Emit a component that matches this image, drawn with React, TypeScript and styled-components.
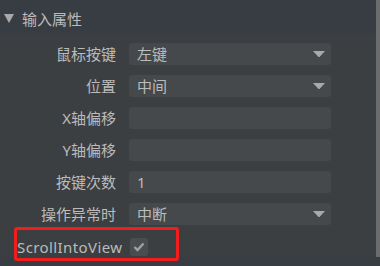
import React from 'react'
import styled, { createGlobalStyle } from 'styled-components'

const GlobalStyle = createGlobalStyle`
  html, body {
    margin: 0;
    padding: 0;
    background: #3c3f41;
  }
  * {
    box-sizing: border-box;
  }
`

const Frame = styled.div`
  position: relative;
  width: 380px;
  height: 266px;
  display: flex;
  flex-direction: column;
  background: #3c3f41;
  font-family: 'Noto Sans', 'Noto Sans CJK SC', sans-serif;
  font-size: 15px;
  color: #bbbbbb;
  overflow: hidden;
`

const Main = styled.div`
  display: flex;
  flex-direction: row;
  height: 257px;
`

const Content = styled.div`
  flex: 1;
  display: flex;
  flex-direction: column;
`

const Scrollbar = styled.div`
  width: 4px;
  background: #6b6c6d;
`

const BottomBar = styled.div`
  flex: 1;
  background: #383d44;
`

const Header = styled.div`
  height: 33px;
  display: flex;
  align-items: center;
  gap: 8px;
  padding: 4px 0 0 4px;
  background: #383d44;
  color: #bbbbbb;
`

const Body = styled.div`
  display: flex;
  flex-direction: column;
  gap: 10px;
  padding-top: 10px;
`

const Row = styled.div`
  display: flex;
  align-items: center;
  gap: 13px;
  height: 22px;
`

const Label = styled.div`
  width: 116px;
  text-align: right;
  white-space: nowrap;
  line-height: 22px;
`

const Field = styled.div`
  width: 202px;
  height: 22px;
  border-radius: 3px;
  background: #46494b;
  display: flex;
  align-items: center;
  justify-content: space-between;
  padding: 0 6px 0 8px;
  line-height: 22px;
`

const CheckRow = styled.div`
  display: flex;
  align-items: center;
  gap: 8px;
  height: 22px;
  padding: 1px 0 0 17px;
`

const CheckLabel = styled.span`
  letter-spacing: 0.4px;
  white-space: nowrap;
`

const CheckBox = styled.div`
  width: 18px;
  height: 18px;
  border-radius: 3px;
  background: #4a4d50;
  display: flex;
  align-items: center;
  justify-content: center;
`

const Highlight = styled.div`
  position: absolute;
  left: 14px;
  top: 227px;
  width: 165px;
  height: 34px;
  border: 3px solid #f21d1d;
  border-radius: 3px;
`

function Caret({ size = 12, color = '#a9a9a9' }: { size?: number; color?: string }) {
  return (
    <svg width={size} height={size * 0.55} viewBox="0 0 12 6.6">
      <polygon points="0,0 12,0 6,6.6" fill={color} />
    </svg>
  )
}

interface FieldRowProps {
  label: string
  value?: string
  select?: boolean
}

function FieldRow({ label, value, select }: FieldRowProps) {
  return (
    <Row>
      <Label>{label}</Label>
      <Field>
        <span>{value}</span>
        {select && <Caret />}
      </Field>
    </Row>
  )
}

export default function App() {
  return (
    <Frame>
      <GlobalStyle />
      <Main>
        <Content>
          <Header>
            <svg width="10" height="9" viewBox="0 0 10 9">
              <polygon points="0,0 10,0 5,9" fill="#a9a9a9" />
            </svg>
            <span>输入属性</span>
          </Header>
          <Body>
            <FieldRow label="鼠标按键" value="左键" select />
            <FieldRow label="位置" value="中间" select />
            <FieldRow label="X轴偏移" />
            <FieldRow label="Y轴偏移" />
            <FieldRow label="按键次数" value="1" />
            <FieldRow label="操作异常时" value="中断" select />
            <CheckRow>
              <CheckLabel>ScrollIntoView</CheckLabel>
              <CheckBox>
                <svg width="12" height="10" viewBox="0 0 12 10">
                  <polyline points="1.5,5 4.5,8 10.5,1.5" fill="none" stroke="#a0a0a0" strokeWidth="2.4" />
                </svg>
              </CheckBox>
            </CheckRow>
          </Body>
        </Content>
        <Scrollbar />
      </Main>
      <BottomBar />
      <Highlight />
    </Frame>
  )
}
